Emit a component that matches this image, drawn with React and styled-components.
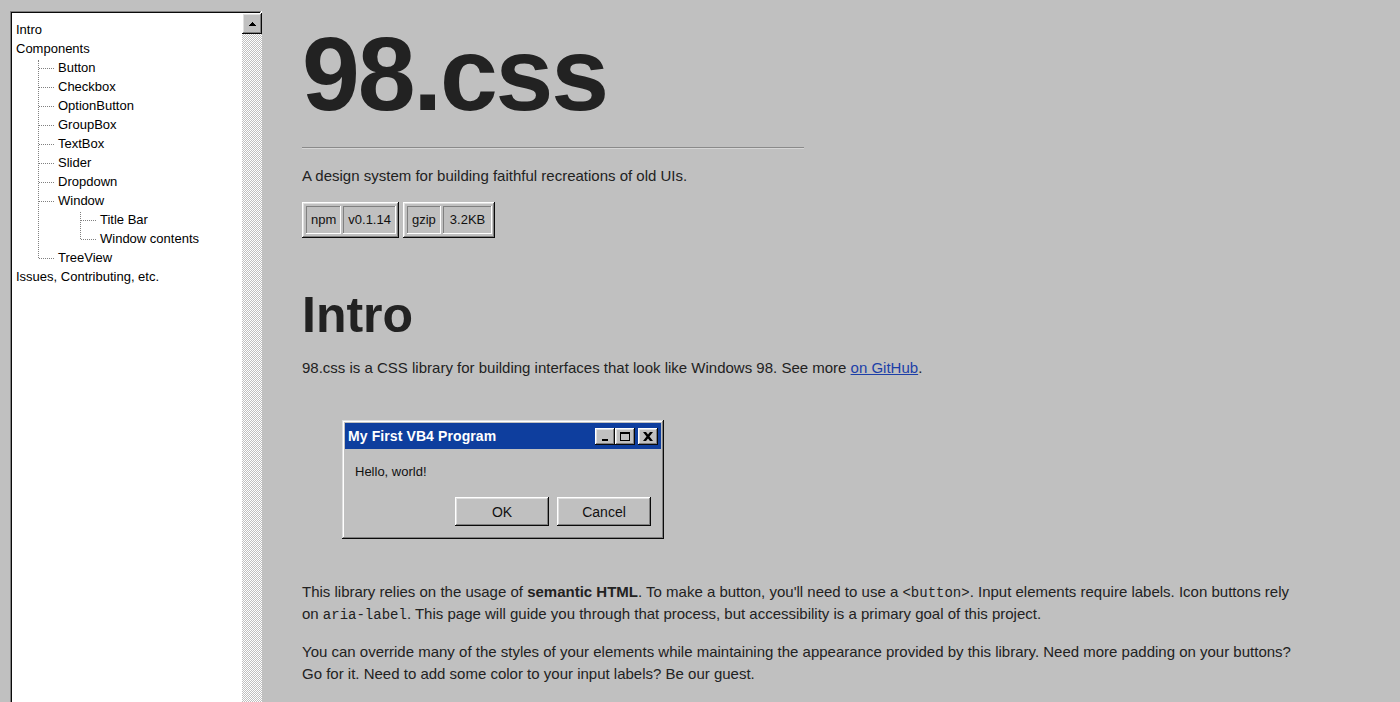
import React from "react";
import styled, { createGlobalStyle } from "styled-components";

const GlobalStyle = createGlobalStyle`
  html, body {
    margin: 0;
    padding: 0;
    background: #c0c0c0;
    overflow: hidden;
  }
  body {
    font-family: "Liberation Sans", Arial, sans-serif;
    color: #222;
  }
`;

const Page = styled.div`
  display: flex;
  align-items: flex-start;
  height: 100vh;
  padding-left: 10px;
`;

const Aside = styled.aside`
  flex: 0 0 252px;
  padding-top: 11px;
`;

const Field = styled.div`
  display: flex;
  height: calc(100vh + 10px);
  padding: 2px 0 2px 2px;
  background: #c0c0c0;
  box-shadow: inset -1px -1px #fff, inset 1px 1px #808080,
    inset -2px -2px #dfdfdf, inset 2px 2px #0a0a0a;
`;

const TreeList = styled.ul`
  flex: 1;
  list-style: none;
  margin: 0;
  padding: 6px 4px;
  background: #fff;
  color: #000;
  font: 13px/16px "Liberation Sans", Arial, sans-serif;
`;

const SubList = styled.ul`
  list-style: none;
  margin: 3px 0 0 22px;
  padding-left: 19px;
  border-left: 1px dotted #808080;
`;

const Item = styled.li`
  position: relative;
  margin-top: 3px;
  white-space: nowrap;

  ${SubList} > &::before {
    content: "";
    position: absolute;
    left: -19px;
    top: 8px;
    width: 15px;
    border-bottom: 1px dotted #808080;
  }

  ${SubList} > &:last-child::after {
    content: "";
    position: absolute;
    left: -22px;
    top: 9px;
    bottom: 0;
    width: 5px;
    background: #fff;
  }
`;

const ScrollTrack = styled.div`
  flex: 0 0 20px;
  background-color: #c0c0c0;
  background-image: conic-gradient(#fff 25%, #c0c0c0 0 50%, #fff 0 75%, #c0c0c0 0);
  background-size: 2px 2px;
`;

const ScrollButton = styled.div`
  height: 21px;
  display: flex;
  align-items: center;
  justify-content: center;
  background: #c0c0c0;
  box-shadow: inset -1px -1px #0a0a0a, inset 1px 1px #fff,
    inset -2px -2px #808080, inset 2px 2px #dfdfdf;
`;

const Main = styled.main`
  margin-left: 40px;
  max-width: 1000px;
  padding-top: 22px;
  font-size: 15px;
  line-height: 22px;
`;

const Title = styled.h1`
  margin: 0;
  font-size: 104px;
  line-height: 1;
  letter-spacing: -2.2px;
  font-weight: 700;
  color: #222;
`;

const Rule = styled.hr`
  width: 502px;
  margin: 21px 0 0;
  border: none;
  border-top: 1px solid #8a8a8a;
  border-bottom: 1px solid #d6d6d6;
`;

const Para = styled.p`
  margin: ${(p) => p.$top || 16}px 0 0;
`;

const Badges = styled.div`
  display: flex;
  gap: 4px;
  margin-top: 15px;
`;

const BadgeGroup = styled.div`
  display: flex;
  gap: 2px;
  padding: 4px 3px 4px 4px;
  background: #c0c0c0;
  box-shadow: inset -1px -1px #0a0a0a, inset 1px 1px #fff,
    inset -2px -2px #808080, inset 2px 2px #dfdfdf;
`;

const BadgeCell = styled.span`
  height: 28px;
  display: flex;
  align-items: center;
  padding: 0 ${(p) => p.$pad || 5}px;
  font-size: 13px;
  color: #111;
  box-shadow: inset -1px -1px #fff, inset 1px 1px #808080;
`;

const Heading = styled.h2`
  margin: 47px 0 0;
  font-size: 50px;
  line-height: 60px;
  font-weight: 700;
  color: #222;
`;

const Link = styled.a`
  color: #1c3fa8;
  text-decoration: underline;
`;

const Code = styled.code`
  font-family: "Liberation Mono", "Courier New", monospace;
  font-size: 14px;
  line-height: 1;
`;

const Window = styled.div`
  width: 322px;
  margin: 41px 0 0 40px;
  padding: 3px;
  box-sizing: border-box;
  background: #c0c0c0;
  box-shadow: inset -1px -1px #0a0a0a, inset 1px 1px #dfdfdf,
    inset -2px -2px #808080, inset 2px 2px #fff;
`;

const TitleBar = styled.div`
  height: 26px;
  display: flex;
  align-items: center;
  justify-content: space-between;
  padding: 0 3px;
  background: #0e3e9e;
`;

const TitleText = styled.span`
  color: #fff;
  font-weight: 700;
  font-size: 14px;
  letter-spacing: 0.1px;
`;

const Controls = styled.div`
  display: flex;
`;

const ControlButton = styled.button`
  width: 20px;
  height: 17px;
  padding: 0;
  margin-left: ${(p) => (p.$gap ? 3 : 0)}px;
  border: none;
  display: flex;
  align-items: center;
  justify-content: center;
  background: #c0c0c0;
  box-shadow: inset -1px -1px #0a0a0a, inset 1px 1px #fff,
    inset -2px -2px #808080, inset 2px 2px #dfdfdf;
`;

const WindowBody = styled.div`
  padding: 14px 10px 10px;
  font-size: 13px;
  line-height: 18px;
  color: #111;
`;

const ButtonRow = styled.div`
  display: flex;
  justify-content: flex-end;
  gap: 8px;
  margin-top: 16px;
`;

const PushButton = styled.button`
  width: 94px;
  height: 29px;
  border: none;
  padding: 0;
  background: #c0c0c0;
  font: 14px "Liberation Sans", Arial, sans-serif;
  color: #111;
  box-shadow: inset -1px -1px #0a0a0a, inset 1px 1px #fff,
    inset -2px -2px #808080, inset 2px 2px #dfdfdf;
`;

const tree = [
  { label: "Intro" },
  {
    label: "Components",
    children: [
      { label: "Button" },
      { label: "Checkbox" },
      { label: "OptionButton" },
      { label: "GroupBox" },
      { label: "TextBox" },
      { label: "Slider" },
      { label: "Dropdown" },
      {
        label: "Window",
        children: [{ label: "Title Bar" }, { label: "Window contents" }],
      },
      { label: "TreeView" },
    ],
  },
  { label: "Issues, Contributing, etc." },
];

const TreeNodes = ({ items }) =>
  items.map((node) => (
    <Item key={node.label}>
      {node.label}
      {node.children && (
        <SubList>
          <TreeNodes items={node.children} />
        </SubList>
      )}
    </Item>
  ));

const UpArrow = () => (
  <svg width="7" height="4" viewBox="0 0 7 4">
    <path d="M3 0h1v1h1v1h1v1h1v1H0V3h1V2h1V1h1z" fill="#000" />
  </svg>
);

const MinimizeIcon = () => (
  <svg width="8" height="9" viewBox="0 0 8 9">
    <rect x="1" y="7" width="6" height="2" fill="#000" />
  </svg>
);

const MaximizeIcon = () => (
  <svg width="10" height="9" viewBox="0 0 10 9">
    <path d="M0 0h10v9H0z M1 2v6h8V2z" fill="#000" fillRule="evenodd" />
  </svg>
);

const CloseIcon = () => (
  <svg width="10" height="9" viewBox="0 0 10 9">
    <path
      d="M0 0h3l2 2.5L7 0h3L6.5 4.5L10 9H7L5 6.5L3 9H0l3.5-4.5z"
      fill="#000"
    />
  </svg>
);

export default function App() {
  return (
    <>
      <GlobalStyle />
      <Page>
        <Aside>
          <Field>
            <TreeList>
              <TreeNodes items={tree} />
            </TreeList>
            <ScrollTrack>
              <ScrollButton>
                <UpArrow />
              </ScrollButton>
            </ScrollTrack>
          </Field>
        </Aside>
        <Main>
          <Title>98.css</Title>
          <Rule />
          <Para $top={16}>A design system for building faithful recreations of old UIs.</Para>
          <Badges>
            <BadgeGroup>
              <BadgeCell>npm</BadgeCell>
              <BadgeCell>v0.1.14</BadgeCell>
            </BadgeGroup>
            <BadgeGroup>
              <BadgeCell>gzip</BadgeCell>
              <BadgeCell $pad={7}>3.2KB</BadgeCell>
            </BadgeGroup>
          </Badges>
          <Heading>Intro</Heading>
          <Para $top={12}>
            98.css is a CSS library for building interfaces that look like Windows 98. See more{" "}
            <Link href="#">on GitHub</Link>.
          </Para>
          <Window>
            <TitleBar>
              <TitleText>My First VB4 Program</TitleText>
              <Controls>
                <ControlButton aria-label="Minimize">
                  <MinimizeIcon />
                </ControlButton>
                <ControlButton aria-label="Maximize">
                  <MaximizeIcon />
                </ControlButton>
                <ControlButton aria-label="Close" $gap>
                  <CloseIcon />
                </ControlButton>
              </Controls>
            </TitleBar>
            <WindowBody>
              Hello, world!
              <ButtonRow>
                <PushButton>OK</PushButton>
                <PushButton>Cancel</PushButton>
              </ButtonRow>
            </WindowBody>
          </Window>
          <Para $top={42}>
            This library relies on the usage of <b>semantic HTML</b>. To make a button, you'll need
            to use a <Code>&lt;button&gt;</Code>. Input elements require labels. Icon buttons rely
            on <Code>aria-label</Code>. This page will guide you through that process, but
            accessibility is a primary goal of this project.
          </Para>
          <Para>
            You can override many of the styles of your elements while maintaining the appearance
            provided by this library. Need more padding on your buttons? Go for it. Need to add some
            color to your input labels? Be our guest.
          </Para>
        </Main>
      </Page>
    </>
  );
}
